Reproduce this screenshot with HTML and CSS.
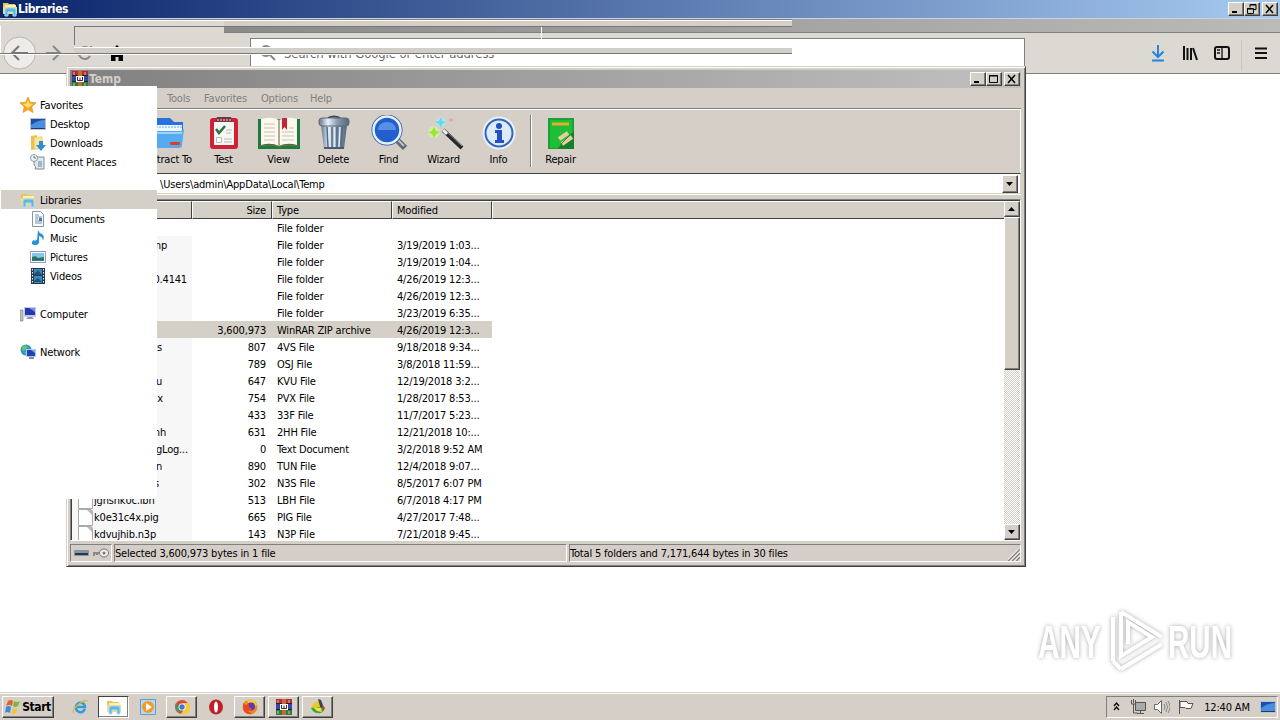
FILE: index.html
```
<!DOCTYPE html>
<html lang="en">

<head>
    <meta charset="UTF-8">
    <title>Desktop</title>
    <link rel="stylesheet" href="styles.css">
</head>

<body>
    <!-- shared icons -->
    <svg class="defs" width="0" height="0">
        <defs>
            <linearGradient id="blue" x1="0" y1="0" x2="0" y2="1">
                <stop offset="0" stop-color="#2f62d0" />
                <stop offset="1" stop-color="#63b5f2" />
            </linearGradient>
            <linearGradient id="metal" x1="0" y1="0" x2="1" y2="0">
                <stop offset="0" stop-color="#65758a" />
                <stop offset=".3" stop-color="#e8f1f8" />
                <stop offset=".6" stop-color="#8b9db0" />
                <stop offset="1" stop-color="#566577" />
            </linearGradient>
        </defs>
        <symbol id="folder" viewBox="0 0 16 16">
            <path d="M1 2h5l1 1h6v10H1z" fill="#e8c45c" />
            <path d="M3 4h11v8H3z" fill="#fff3b0" />
            <path d="M1 6h14v7H1z" fill="#f7da7b" />
            <path d="M3 15V9q0-2 2-2h7q2 0 2 2v6h-3v-4H6v4z" fill="#62b5e5" stroke="#a9ddf5" />
        </symbol>
        <symbol id="winrar" viewBox="0 0 16 16">
            <path d="M0 0h16v5H0z" fill="#b52a3c" />
            <path d="M0 5h16v5H0z" fill="#3548a8" />
            <path d="M0 10h16v6H0z" fill="#2b8040" />
            <path d="M0 4.500h16M0 10.500h16" stroke="#222" />
            <path d="M6 0h4v16H6z" fill="#c66b2c" />
            <path d="M4 5h8v6H4z" fill="#fff" />
            <path d="M5.500 6v3.500h5V6M8 6.500v3" fill="none" stroke="#3a2630" />
            <path d="M2 1v3M13 1v3M2 12v3M13 12v3" stroke="#e8bd85" />
        </symbol>
        <symbol id="monitor" viewBox="0 0 16 16">
            <path d="M0 2h16v12H0z" fill="#b9c4d0" />
            <path d="M1 3h14v9H1z" fill="#1b4fac" />
            <path d="M1 9q7-5 14-5v8H1z" fill="#4a8fdb" />
            <path d="M1 12h14v1H1z" fill="#243d68" />
        </symbol>
    </svg>

    <!-- browser window -->
    <div class="browser">
        <div class="browser-tabs"></div>
        <div class="browser-bar">
            <svg class="browser-nav" width="130" height="40" viewBox="0 33 130 40" fill="none" stroke="#777" stroke-width="2">
                <circle cx="19.500" cy="53" r="16" fill="#eeece8" stroke="#b8b5b0" stroke-width="1" />
                <path d="M28 53H13M19 46l-7 7 7 7" />
                <path d="M46 53h14M53 46l7 7-7 7" stroke="#8b8985" />
                <path d="M90 56a6 6 0 1 1 0-6M91 46v5h-5" stroke="#8b8985" />
                <path d="M117 45l7 7h-1v9h-12v-9h-1z" fill="#000" stroke="none" />
                <path d="M115.500 61v-4h3v4" fill="#dcd8d2" stroke="none" />
            </svg>
            <div class="url">
                <svg width="16" height="16" viewBox="0 0 16 16" fill="none" stroke="#888" stroke-width="2">
                    <circle cx="6" cy="6" r="5" />
                    <path d="M9.500 9.500L15 15" />
                </svg>
                <span>Search with Google or enter address</span>
            </div>
            <svg class="browser-tools" width="130" height="40" viewBox="1150 33 130 40" fill="none" stroke="#111" stroke-width="2">
                <path d="M1158 45v12M1152.500 51.500l5.500 5.500 5.500-5.500M1152 60.500h12" stroke="#2585e0" />
                <path d="M1184 46v14M1187.500 48v12M1191 48v12M1193 48l4 12" />
                <rect x="1215" y="47" width="14" height="12" rx="2" />
                <path d="M1222 47v12M1217 50h3M1217 53h3" stroke-width="1.300" />
                <path d="M1241.500 40v31" stroke="#cac5be" stroke-width="1" />
                <path d="M1255 48.500h12M1255 53h12M1255 58h12" />
            </svg>
        </div>
    </div>

    <!-- WinRAR window -->
    <div class="rar">
        <div class="rar-title">
            <svg width="16" height="16"><use href="#winrar" /></svg>
            <b>Temp</b>
            <div class="win-btns">
                <i><svg viewBox="0 0 12 10"><path d="M2 8h5" stroke-width="2" /></svg></i>
                <i><svg viewBox="0 0 12 10"><path d="M1.500 1.500h8v7h-8zM1 2h9" /></svg></i>
                <i class="close"><svg viewBox="0 0 12 10"><path d="M2 1l7 8M9 1L2 9" stroke-width="1.500" /></svg></i>
            </div>
        </div>
        <div class="rar-menu"><span class="m-tools">Tools</span><span class="m-fav">Favorites</span><span class="m-opt">Options</span><span>Help</span></div>
        <div class="rar-tools">
            <div class="tool">
                <svg width="36" height="36" viewBox="0 0 36 36">
                    <path d="M4 3h15l4 4h9v12H4z" fill="#2870dd" />
                    <path d="M5 10h26v8H5z" fill="#eef6ff" />
                    <path d="M5 12h26" stroke="#78a5e8" stroke-dasharray="2 1" />
                    <path d="M2 16h28l3-2-2 16q0 3-3 3H6q-3 0-3-3z" fill="#55aaf0" />
                    <path d="M3 18h28" stroke="#9dd2ff" stroke-width="2" />
                    <rect x="19" y="27" width="10" height="3" rx="1" fill="#e33a25" />
                </svg>
                <span>Extract To</span>
            </div>
            <div class="tool">
                <svg width="36" height="36" viewBox="0 0 36 36">
                    <rect x="4" y="3" width="28" height="31" rx="3" fill="#d02038" />
                    <path d="M8 7h20v23H8z" fill="#f5f5f2" />
                    <path d="M11 2h14l2 5H9z" fill="#7d3440" />
                    <path d="M11 5h14" stroke="#ddd" stroke-dasharray="2 1" />
                    <path d="M10 14l3 4 6-7" fill="none" stroke="#267342" stroke-width="2.500" />
                    <path d="M20 15h6M20 18h5M18 24h8M18 27h8" stroke="#bbb" />
                    <path d="M10.500 22.500h5v5h-5z" fill="#fff" stroke="#bbb" />
                </svg>
                <span>Test</span>
            </div>
            <div class="tool">
                <svg width="44" height="36" viewBox="0 0 44 36">
                    <path d="M1 4h42v30H1z" fill="#1d7a41" />
                    <path d="M4 4q11-3 18 1 8-4 18-1v26q-10-3-18 1-8-4-18-1z" fill="#fbf8ee" />
                    <path d="M22 5v26" stroke="#b3a992" stroke-width="2" />
                    <path d="M7 9h11M7 13h11M7 17h11M7 21h11M7 25h11M25 17h12M25 21h12M25 25h12M32 13h5" stroke="#c9c2b2" />
                    <path d="M25 3h5v12l-2.500-3-2.500 3z" fill="#c62535" />
                    <path d="M3 31q10-2 17 0 2 2 4 0 7-2 17 0" fill="none" stroke="#8b6a44" />
                </svg>
                <span>View</span>
            </div>
            <div class="tool">
                <svg width="36" height="36" viewBox="0 0 36 36">
                    <path d="M12 3q6-3 12 0" fill="none" stroke="#3c4754" stroke-width="2" />
                    <path d="M5 10h26l-3 24H8z" fill="url(#metal)" />
                    <path d="M11 12l1 20M16 12v20M21 12v20M26 12l-1 20" stroke="#526a84" stroke-width="1.500" />
                    <path d="M13 12l1 20M18.500 12v20M24 12l-1 20" stroke="#dcebf8" stroke-width="1.500" />
                    <rect x="3" y="3" width="30" height="8" rx="3" fill="url(#metal)" stroke="#5b6b7c" />
                    <path d="M8 33h20" stroke="#4d5c6c" stroke-width="2" />
                </svg>
                <span>Delete</span>
            </div>
            <div class="tool">
                <svg width="36" height="36" viewBox="0 0 36 36">
                    <path d="M25 24l9 9" stroke="#626970" stroke-width="6" />
                    <path d="M25 23l8 8" stroke="#b9c2ca" stroke-width="2" />
                    <circle cx="16" cy="15" r="13.500" fill="url(#blue)" stroke="#2754a8" stroke-width="4" />
                    <circle cx="16" cy="15" r="13.500" fill="#205fce" stroke="#e7f0fa" stroke-width="2.500" />
                    <ellipse cx="16" cy="14" rx="9" ry="7" fill="#73a9f0" opacity=".65" />
                    <path d="M7 15h18q-2 8-9 9-7-1-9-9" fill="#255dce" />
                </svg>
                <span>Find</span>
            </div>
            <div class="tool">
                <svg width="40" height="36" viewBox="0 0 40 36">
                    <circle cx="10" cy="17" r="6" fill="#d4f3a2" opacity=".7" />
                    <circle cx="17" cy="7" r="5" fill="#b3e5f0" opacity=".8" />
                    <path d="M10 12l2 4 4 1-4 2-2 4-2-4-4-2 4-1z" fill="#9be62e" />
                    <path d="M17 2l1 4 4 1-4 2-1 4-2-4-4-2 4-1z" fill="#61dbea" />
                    <path d="M27 3v4M25 5h4" stroke="#eea1ae" stroke-width="1.500" />
                    <path d="M19 15l19 18" stroke="#26282a" stroke-width="4" />
                    <path d="M20 14l18 17" stroke="#8a8c8f" />
                    <path d="M19 15l4 4" stroke="#eee" stroke-width="3" />
                </svg>
                <span>Wizard</span>
            </div>
            <div class="tool">
                <svg width="36" height="36" viewBox="0 0 36 36">
                    <circle cx="18" cy="18" r="16.500" fill="#e9f1fb" />
                    <circle cx="18" cy="18" r="13.500" fill="#dceafa" stroke="#3664bd" stroke-width="2" />
                    <circle cx="18" cy="11" r="3" fill="#234fc2" />
                    <path d="M14 15h7v10h2v3h-9v-3h2v-7h-2z" fill="#234fc2" />
                </svg>
                <span>Info</span>
            </div>
            <div class="sep"></div>
            <div class="tool">
                <svg width="36" height="36" viewBox="0 0 36 36">
                    <path d="M5 3h26v31H5z" fill="#1d9f37" />
                    <path d="M7 5h22v28H7z" fill="#20bd36" />
                    <path d="M9 9h17" stroke="#e6ab32" stroke-width="3" />
                    <path d="M18 30l13-14v18H14z" fill="#16812b" />
                    <path d="M16 24l9-6M19 29l10-7" stroke="#e8cba0" stroke-width="4" />
                    <path d="M17 30l13-13" stroke="#357e36" />
                </svg>
                <span>Repair</span>
            </div>
        </div>
        <div class="rar-path">
            <span>\Users\admin\AppData\Local\Temp</span>
            <i class="drop"><svg viewBox="0 0 8 4"><path d="M0 0h7L3.500 4z" /></svg></i>
        </div>
        <div class="rar-list">
            <div class="list-head"><span></span><span class="size">Size</span><span>Type</span><span>Modified</span><span></span></div>
            <div class="list-body">
                <div class="row"><span></span><span></span><span>File folder</span><span></span></div>
                <div class="row"><span class="e25">mp</span><span></span><span>File folder</span><span>3/19/2019 1:03...</span></div>
                <div class="row"><span></span><span></span><span>File folder</span><span>3/19/2019 1:04...</span></div>
                <div class="row"><span class="e5">0.4141</span><span></span><span>File folder</span><span>4/26/2019 12:3...</span></div>
                <div class="row"><span></span><span></span><span>File folder</span><span>4/26/2019 12:3...</span></div>
                <div class="row"><span></span><span></span><span>File folder</span><span>3/23/2019 6:35...</span></div>
                <div class="row selected"><span></span><span>3,600,973</span><span>WinRAR ZIP archive</span><span>4/26/2019 12:3...</span></div>
                <div class="row"><span class="e30">s</span><span>807</span><span>4VS File</span><span>9/18/2018 9:34...</span></div>
                <div class="row"><span></span><span>789</span><span>OSJ File</span><span>3/8/2018 11:59...</span></div>
                <div class="row"><span class="e30">u</span><span>647</span><span>KVU File</span><span>12/19/2018 3:2...</span></div>
                <div class="row"><span class="e29">x</span><span>754</span><span>PVX File</span><span>1/28/2017 8:53...</span></div>
                <div class="row"><span></span><span>433</span><span>33F File</span><span>11/7/2017 5:23...</span></div>
                <div class="row"><span class="e26">nh</span><span>631</span><span>2HH File</span><span>12/21/2018 10:...</span></div>
                <div class="row"><span class="e4">gLog...</span><span>0</span><span>Text Document</span><span>3/2/2018 9:52 AM</span></div>
                <div class="row"><span class="e30">n</span><span>890</span><span>TUN File</span><span>12/4/2018 9:07...</span></div>
                <div class="row"><span class="e33">s</span><span>302</span><span>N3S File</span><span>8/5/2017 6:07 PM</span></div>
                <div class="row"><span class="file">jghshk0c.lbh</span><span>513</span><span>LBH File</span><span>6/7/2018 4:17 PM</span></div>
                <div class="row"><span class="file">k0e31c4x.pig</span><span>665</span><span>PIG File</span><span>4/27/2017 7:48...</span></div>
                <div class="row"><span class="file">kdvujhib.n3p</span><span>143</span><span>N3P File</span><span>7/21/2018 9:45...</span></div>
            </div>
            <div class="scroll">
                <i><svg viewBox="0 0 8 4"><path d="M0 4h7L3.500 0z" /></svg></i>
                <div class="thumb"></div>
                <i class="down"><svg viewBox="0 0 8 4"><path d="M0 0h7L3.500 4z" /></svg></i>
            </div>
        </div>
        <div class="rar-status">
            <div class="st-icons">
                <svg width="38" height="16" viewBox="0 -1 38 16">
                    <rect x="3" y="4" width="15" height="6" rx="1" fill="#8795a3" />
                    <path d="M4 7h13v2H4z" fill="#25384c" />
                    <path d="M22 7h8M23 7v3M26 7v2" stroke="#888" stroke-width="2" />
                    <ellipse cx="33" cy="7" rx="4.500" ry="4" fill="#eee" stroke="#777" />
                    <circle cx="33" cy="7" r="1.500" fill="#777" />
                </svg>
            </div>
            <div class="st-sel">Selected 3,600,973 bytes in 1 file</div>
            <div class="st-total">Total 5 folders and 7,171,644 bytes in 30 files
                <svg class="grip" width="12" height="12" viewBox="0 0 12 12"><path d="M0 12L12 0M4 12l8-8M8 12l4-4" stroke="#808080" stroke-width="1.500" /><path d="M-1.500 12L12-1.500M2.500 12L12 2.500M6.500 12L12 6.500" stroke="#fff" /></svg>
            </div>
        </div>
    </div>

    <!-- Libraries window, only partly repainted -->
    <div class="lib-title">
        <svg width="16" height="16"><use href="#folder" /></svg>
        <b>Libraries</b>
        <div class="win-btns">
            <i><svg viewBox="0 0 12 10"><path d="M2 8h5" stroke-width="2" /></svg></i>
            <i><svg viewBox="0 0 12 10"><path d="M4 3.500v-3h6v5H7M4 1h6M1.500 4.500h6v5h-6zM1 5h6" /></svg></i>
            <i class="close"><svg viewBox="0 0 12 10"><path d="M2 1l7 8M9 1L2 9" stroke-width="1.500" /></svg></i>
        </div>
    </div>
    <div class="lib-edge"></div>
    <div class="lib-corner"></div>
    <div class="lib-shade"></div>
    <div class="lib-tick"></div>
    <div class="lib-band"></div>
    <div class="lib-line"></div>
    <div class="lib-nav">
        <div class="item top"><svg viewBox="0 0 16 16"><path d="M8 0l2.300 5.200 5.700.6-4.200 3.900L13 15.500l-5-3-5 3 1.200-5.800L0 5.800l5.700-.6z" fill="#f9a51e" stroke="#d8861d" stroke-width=".6" /><path d="M8 3l1.500 3.500 3.500.5-3 2.500L8 11l-2-1.500L3 7l3.500-.5z" fill="#ffe36a" /></svg><span>Favorites</span></div>
        <div class="item"><svg><use href="#monitor" /></svg><span>Desktop</span></div>
        <div class="item"><svg viewBox="0 0 16 16"><path d="M1 1l6-1v14l-6 1z" fill="#e9c35a" /><path d="M4 2h8v12H4z" fill="#f9e59b" stroke="#dfb84d" stroke-width=".6" /><path d="M9 6h4v4h3l-5 6-5-6h3z" fill="#2e8fd6" /></svg><span>Downloads</span></div>
        <div class="item"><svg viewBox="0 0 16 16"><path d="M4 3h10v12H5q2-2-1-4z" fill="#dfe6ea" stroke="#7e8d98" /><path d="M8 8h4M8 10h4M8 12h4" stroke="#5d87a8" /><circle cx="4" cy="4" r="3.500" fill="#edf4f7" stroke="#8a9dab" /><path d="M4 2v2h2" fill="none" stroke="#456" stroke-width=".8" /></svg><span>Recent Places</span></div>
        <div class="gap"></div>
        <div class="item top active"><svg><use href="#folder" /></svg><span>Libraries</span></div>
        <div class="item"><svg viewBox="0 0 16 16"><path d="M2.500.5h8l3 3v12h-11z" fill="#fff" stroke="#8795a2" /><path d="M5 4h4M5 6h7M5 8h3M5 10h7M5 12h7" stroke="#6791b5" /><path d="M9 7h3v3H9z" fill="#47789f" /></svg><span>Documents</span></div>
        <div class="item"><svg viewBox="0 0 16 16"><path d="M8 0q1 3 4 4 3 2 1 7 0-4-4-5v6q0 3-4 3-4 0-3-3 1-3 5-2z" fill="#2793d2" /><path d="M4 11l2-1" stroke="#a3ddff" /></svg><span>Music</span></div>
        <div class="item"><svg viewBox="0 0 16 16"><path d="M.5 2.500h15v11H.5z" fill="#fff" stroke="#8f9ca5" /><path d="M2 4h12v8H2z" fill="#83c7ed" /><path d="M2 8q4-2 6 1l6-1v4H2z" fill="#2d765d" /><path d="M2 11h12v1H2z" fill="#2b78a9" /></svg><span>Pictures</span></div>
        <div class="item"><svg viewBox="0 0 16 16"><path d="M1 0h14v16H1z" fill="#26394b" /><path d="M4 1h8v6H4zM4 8h8v7H4z" fill="#348ac4" /><path d="M4 6l4-4 4 5H4M4 13l4-3 4 4H4" fill="#205374" /><path d="M2.500 1v15M13.500 1v15" stroke="#eee" stroke-dasharray="1.500 1.500" /></svg><span>Videos</span></div>
        <div class="gap"></div>
        <div class="item top"><svg viewBox="0 0 16 16"><path d="M0 4h3v11H0z" fill="#b7c7b9" stroke="#778" stroke-width=".6" /><path d="M4 1h12v10H4z" fill="#c5cce0" /><path d="M5 2h10v7H5z" fill="#2337b4" /><path d="M9 2h6v4z" fill="#6e8ff3" /><path d="M8 11h4l2 2H6z" fill="#8b97aa" /></svg><span>Computer</span></div>
        <div class="gap"></div>
        <div class="item top"><svg viewBox="0 0 16 16"><circle cx="6" cy="6" r="5.500" fill="#2a96cd" /><path d="M2 3q3-3 6 0L5 6 2 7M4 8l4-1v4z" fill="#62c764" /><path d="M6 5h10v8H6z" fill="#bcc8dc" /><path d="M7 6h8v6H7z" fill="#1d44b5" /><path d="M11 6h4v3z" fill="#7fa8f5" /><path d="M9 13h5v2H9z" fill="#8390a2" /></svg><span>Network</span></div>
    </div>

    <!-- watermark -->
    <svg class="mark" width="230" height="90" viewBox="1025 595 230 90">
        <g class="mark-shape">
            <text x="1038" y="658" textLength="63" lengthAdjust="spacingAndGlyphs">ANY</text>
            <text x="1168" y="658" textLength="64" lengthAdjust="spacingAndGlyphs">RUN</text>
            <path d="M1121 612l41 25M1121 612v44l31-19-24-15v22M1113 617v44M1121 669l41-25M1113 661l8 8" />
        </g>
    </svg>

    <!-- taskbar -->
    <div class="taskbar">
        <div class="start"><svg width="17" height="16" viewBox="0 0 17 16"><path d="M3 2q3-2 5 0L7 7Q4 5 1 7z" fill="#e66032" /><path d="M9 2q3 2 6 0l-2 5q-3 2-5 0z" fill="#79b83b" /><path d="M1 8q3-2 5 0l-1 6q-3-2-5 0z" fill="#388edb" /><path d="M8 9q3 2 5 0l-2 5q-3 2-5 0z" fill="#f2c53b" /></svg><b>Start</b></div>
        <div class="task flat"><svg viewBox="0 0 16 16"><path d="M13 10q-2 4-6 3-4-2-3-6 2-4 6-3 3 1 3 4H5" fill="none" stroke="#2f9be0" stroke-width="2.500" /><path d="M2 14Q-1 11 7 5q8-6 8-2" fill="none" stroke="#e2b734" stroke-width="1.300" /></svg></div>
        <div class="task pressed"><svg><use href="#folder" /></svg></div>
        <div class="task flat"><svg viewBox="0 0 16 16"><path d="M.5.5h15v15H.5z" fill="#b9d9f0" stroke="#5a9ed0" /><circle cx="8" cy="8" r="6" fill="#f29a25" /><path d="M6 4l6 4-6 4z" fill="#fff" /></svg></div>
        <div class="task"><svg viewBox="0 0 16 16"><circle cx="8" cy="8" r="7" fill="#d84936" /><path d="M2 4l5 10a7 7 0 0 1-5-10" fill="#35a15a" /><path d="M8 4h7a7 7 0 0 1-8 11l4-7z" fill="#f3cb43" /><circle cx="8" cy="8" r="3.500" fill="#fff" /><circle cx="8" cy="8" r="2.700" fill="#3e78d5" /></svg></div>
        <div class="task flat"><svg viewBox="0 0 16 16"><ellipse cx="8" cy="8" rx="7" ry="7.500" fill="#bd2027" /><ellipse cx="8" cy="8" rx="2" ry="5.500" fill="#fff" /></svg></div>
        <div class="task"><svg viewBox="0 0 16 16"><circle cx="8" cy="8" r="7.500" fill="#f28a20" /><path d="M5 1h7l3 5-3 2-5-1z" fill="#f7cc38" /><circle cx="9" cy="7.500" r="4" fill="#553cb0" /><path d="M1 4l3 2 3-1v3l3 2q-2 3-5 1l5 4Q1 16 1 7z" fill="#e84727" /></svg></div>
        <div class="task"><svg><use href="#winrar" /></svg></div>
        <div class="task"><svg viewBox="0 0 16 16"><path d="M1 9Q4 2 11 1l-1 8z" fill="#f0c71e" /><path d="M8 0l3 1 3 8-3 2z" fill="#26456a" /><path d="M1 9q7-2 14 0-2 6-7 5-5 0-7-5" fill="#37a446" /><path d="M3 8l8 1 1 4-5-1z" fill="#f4e13c" /><path d="M12 5l3 4-2 3z" fill="#da3d27" /></svg></div>
        <div class="tray">
            <svg class="chev" width="8" height="12" viewBox="0 0 8 12" fill="none" stroke="#000" stroke-width="1.300"><path d="M1 5l2.500-3L6 5M1 9l2.500-3L6 9" /></svg>
            <svg class="net" width="16" height="16" viewBox="0 0 16 16" fill="#f5f5f5" stroke="#555"><path d="M5.500 3.500h10v8h-10z" fill="#aaa" /><path d="M7 14.500h7M10.500 12v2M1.500 1v4h4V1M3.500 0v4M3.500 5v9h4" fill="none" /></svg>
            <svg class="vol" width="16" height="16" viewBox="0 0 16 16" fill="#f8f8f8" stroke="#666"><path d="M.5 5.500h3l4-4v13l-4-4h-3z" /><path d="M10 5q2 3 0 6M12 3q3 5 0 10M14 2q4 6 0 12" fill="none" stroke="#888" /></svg>
            <svg class="flag" width="16" height="16" viewBox="0 0 16 16" fill="#f8f8f8" stroke="#555"><path d="M1.500 1v14M2 2.500h7l1 2h5l-2 5H8l-1-1H2z" /></svg>
            <span>12:40 AM</span>
            <svg width="16" height="16"><use href="#monitor" /></svg>
        </div>
    </div>
</body>

</html>
```
FILE: styles.css
```
* {
    box-sizing: border-box;
}

body {
    position: relative;
    width: 1280px;
    height: 720px;
    margin: 0;
    overflow: hidden;
    background-color: #fff;
    color: #000;
    font: 11px/17px "DejaVu Sans Condensed", "DejaVu Sans", sans-serif;
    font-stretch: condensed;
    letter-spacing: -0.18px;
    white-space: nowrap;
}

svg {
    display: block;
    flex: none;
}

.defs {
    position: absolute;
}

i {
    display: flex;
    align-items: center;
    justify-content: center;
    background-color: #d4d0c8;
    border: 1px solid;
    border-color: #fff #404040 #404040 #fff;
    box-shadow: inset -1px -1px #808080;
}

/* browser */
.browser {
    position: absolute;
    top: 19px;
    left: 0;
    width: 1280px;
}

.browser-tabs {
    height: 14px;
    background: linear-gradient(to right, #808080, #bcbab8);
    border-bottom: 1px solid #808080;
}

.browser-bar {
    display: flex;
    height: 41px;
    background-color: #dcd8d2;
    border-bottom: 1px solid #808080;
}

.url {
    display: flex;
    align-items: center;
    gap: 8px;
    width: 775px;
    height: 30px;
    margin: 5px 125px 0 120px;
    padding-left: 9px;
    background-color: #fff;
    border: 1px solid #808080;
    color: #666;
    font: 13px "DejaVu Sans Condensed", "DejaVu Sans", sans-serif;
    letter-spacing: -0.1px;
}

/* title buttons */
.win-btns {
    display: flex;
    margin-left: auto;
}

.win-btns i {
    width: 16px;
    height: 14px;
}

.win-btns .close {
    margin-left: 2px;
}

.win-btns svg {
    width: 12px;
    height: 10px;
    fill: none;
    stroke: #000;
}

/* winrar */
.rar {
    position: absolute;
    top: 66px;
    left: 66px;
    width: 960px;
    height: 501px;
    padding: 3px 4px 3px 3px;
    background-color: #d4d0c8;
    border: 1px solid;
    border-color: #d4d0c8 #404040 #404040 #d4d0c8;
    box-shadow: inset 1px 1px #fff, inset -1px -1px #808080;
}

.rar-title {
    display: flex;
    align-items: center;
    height: 18px;
    padding: 0 1px 0 2px;
    background: linear-gradient(to right, #808080, #c0c0c0);
    color: #d4d0c8;
}

b {
    font-size: 12px;
    letter-spacing: -0.4px;
}

.rar-title b {
    margin-left: 1px;
    letter-spacing: 0;
}

.rar-menu {
    display: flex;
    height: 21px;
    padding-left: 97px;
    background-color: #d5cfc8;
    border-bottom: 1px solid #808080;
    color: #808080;
    line-height: 21px;
}

.m-tools {
    width: 37px;
}

.m-fav {
    width: 57px;
}

.m-opt {
    width: 49px;
}

.rar-tools {
    display: flex;
    height: 64px;
    padding: 5px 0 0 70px;
    background-color: #d5cfc8;
    border: 1px solid #fff;
    border-bottom: 0;
}

.tool {
    display: flex;
    flex-direction: column;
    align-items: center;
    width: 55px;
}

.tool svg {
    height: 36px;
}

.sep {
    width: 2px;
    height: 52px;
    margin: 0 1px 0 4px;
    border-left: 1px solid #808080;
    border-right: 1px solid #fff;
}

.rar-path {
    display: flex;
    justify-content: space-between;
    height: 21px;
    padding-left: 89px;
    background-color: #fff;
    border: 1px solid;
    border-color: #404040 #d4d0c8 #d4d0c8 #808080;
    box-shadow: 0 1px #fff;
    line-height: 22px;
}

.drop {
    width: 16px;
    height: 18px;
    margin: 1px 2px 0 0;
}

.drop svg,
.scroll svg {
    width: 8px;
    height: 4px;
}

.rar-list {
    position: relative;
    height: 342px;
    margin-top: 5px;
    background-color: #fff;
    border: 1px solid;
    border-color: #808080 #fff #fff #808080;
    box-shadow: inset 1px 1px #404040;
}

.list-head {
    display: flex;
    height: 19px;
    padding: 1px 16px 0 1px;
}

.list-head span {
    width: 120px;
    padding-left: 4px;
    background-color: #d4d0c8;
    border: 1px solid;
    border-color: #fff #404040 #404040 #fff;
    line-height: 18px;
}

.list-head .size {
    width: 80px;
    padding-right: 5px;
    text-align: right;
}

.list-head span:nth-child(4) {
    width: 100px;
}

.list-head span:last-child {
    flex: 1;
    border-right: 0;
}

.list-body {
    height: 321px;
    margin-left: 1px;
    overflow: hidden;
    background: linear-gradient(to right, #f7f7f7 120px, #fff 120px);
}

.row {
    display: grid;
    grid-template-columns: 120px 80px 120px 100px;
    width: 420px;
    height: 17px;
    line-height: 19px;
}

.row:first-child {
    background-color: #fff;
}

.row span {
    padding-left: 5px;
}

.row span:first-child,
.row span:nth-child(2) {
    text-align: right;
}

.row span:nth-child(2) {
    padding-right: 6px;
}

.selected {
    background-color: #d4d0c8;
}

/* distance of the name's end from the column edge */
.row .e4 { padding-right: 4px; }
.row .e5 { padding-right: 5px; }
.row .e25 { padding-right: 25px; }
.row .e26 { padding-right: 26px; }
.row .e29 { padding-right: 29px; }
.row .e30 { padding-right: 30px; }
.row .e33 { padding-right: 33px; }

.row .file {
    display: flex;
    gap: 1px;
    text-align: left;
}

.file::before {
    content: "";
    width: 13px;
    height: 15px;
    margin: 1px 0 0 1px;
    background: linear-gradient(225deg, #bbb 3px, #fff 4px);
    border: 1px solid #aaa;
    border-radius: 0 3px 0 0;
}

.scroll {
    position: absolute;
    top: 1px;
    right: 0;
    display: flex;
    flex-direction: column;
    width: 16px;
    height: 339px;
    background: repeating-conic-gradient(#fff 0 25%, #d4d0c8 0 50%) 0 0 / 2px 2px;
}

.scroll i {
    height: 16px;
}

.thumb {
    height: 153px;
    background-color: #d4d0c8;
    border: 1px solid;
    border-color: #fff #404040 #404040 #fff;
    box-shadow: inset -1px -1px #808080;
}

.scroll .down {
    margin-top: auto;
}

.rar-status {
    display: flex;
    gap: 2px;
    height: 18px;
    margin-top: 3px;
    line-height: 18px;
}

.rar-status > div {
    background-color: #d5cec8;
    border: 1px solid;
    border-color: #808080 #fff #fff #808080;
}

.st-icons {
    width: 42px;
}

.st-sel {
    width: 453px;
}

.st-total {
    display: flex;
    flex: 1;
    justify-content: space-between;
}

.grip {
    align-self: flex-end;
}

/* libraries */
.lib-title {
    position: absolute;
    top: 0;
    left: 0;
    display: flex;
    align-items: center;
    width: 1280px;
    height: 19px;
    padding: 0 2px;
    background: linear-gradient(to right, #0a246a, #a6caf0);
    border-bottom: 1px solid #c8d3e3;
    color: #fff;
}

.lib-edge {
    position: absolute;
    top: 19px;
    left: 0;
    width: 792px;
    height: 8px;
    background-color: #d4d0c8;
    border-top: 1px solid #808080;
    border-bottom: 1px solid #777;
    box-shadow: inset 0 1px #fff;
}

.lib-corner {
    position: absolute;
    top: 20px;
    left: 0;
    width: 224px;
    height: 25px;
    clip-path: polygon(0 0, 100% 0, 100% 100%, 74px 100%, 74px 6px, 0 6px);
    background-color: #dcd8d2;
    border-top: 1px solid #fff;
}

.lib-corner::before {
    content: "";
    position: absolute;
    top: 5px;
    left: 74px;
    width: 150px;
    height: 22px;
    border-top: 1px solid #777;
    border-left: 1px solid #777;
}

.lib-shade {
    position: absolute;
    top: 26px;
    left: 0;
    width: 74px;
    height: 27px;
    border-left: 1px solid #fff;
}

.lib-shade::after {
    content: "";
    position: absolute;
    top: 0;
    left: 0;
    width: 73px;
    height: 9px;
    background-color: #dcd8d2;
}

.lib-tick {
    position: absolute;
    top: 27px;
    left: 541px;
    width: 1px;
    height: 12px;
    background-color: #fff;
}

.lib-band {
    position: absolute;
    top: 47px;
    left: 74px;
    width: 718px;
    height: 6px;
    background-color: #d2cfca;
    border-top: 1px solid #fff;
}

.lib-line {
    position: absolute;
    top: 53px;
    left: 0;
    width: 792px;
    height: 2px;
    background-color: #777;
    border-bottom: 1px solid #fff;
}

.lib-nav {
    position: absolute;
    top: 86px;
    left: 0;
    width: 157px;
    height: 413px;
    padding: 9px 0 0 1px;
    background-color: #fff;
}

.item {
    display: flex;
    align-items: center;
    gap: 4px;
    height: 19px;
    padding-left: 29px;
}

.item.top {
    padding-left: 19px;
}

.item span {
    line-height: 19px;
    padding-top: 1px;
}

.item svg,
.task svg {
    width: 16px;
    height: 16px;
}

.active {
    background-color: #d4d0c8;
}

.gap {
    height: 19px;
}

.mark {
    position: absolute;
    top: 595px;
    left: 1025px;
}

.mark-shape {
    fill: #fff;
    filter: drop-shadow(0 0 2px #aaa);
    font: bold 47px "Liberation Sans", sans-serif;
    letter-spacing: 0;
}

.mark-shape path {
    fill: none;
    stroke: #fff;
    stroke-width: 4;
}

/* taskbar */
.taskbar {
    position: absolute;
    bottom: 0;
    left: 0;
    display: flex;
    align-items: center;
    width: 1280px;
    height: 28px;
    padding: 1px 2px 0;
    background-color: #d5cfc8;
    border-top: 1px solid #d4d0c8;
    box-shadow: inset 0 1px #fff;
}

.start,
.task {
    display: flex;
    align-items: center;
    justify-content: center;
    width: 31px;
    height: 22px;
    margin-right: 3px;
    border: 1px solid;
    border-color: #fff #404040 #404040 #fff;
    box-shadow: inset -1px -1px #808080;
}

.start {
    width: 52px;
    margin-right: 10px;
}

.task.flat {
    border-color: transparent;
    box-shadow: none;
}

.task.pressed {
    background-color: #fff;
    border-color: #404040 #fff #fff #404040;
}

.tray {
    display: flex;
    align-items: center;
    width: 172px;
    height: 22px;
    margin-left: auto;
    padding: 0 1px 0 6px;
    border: 1px solid;
    border-color: #808080 #fff #fff #808080;
}

.net {
    margin-left: 9px;
}

.vol,
.flag {
    margin-left: 8px;
}

.tray span {
    margin: 0 auto;
}
```
